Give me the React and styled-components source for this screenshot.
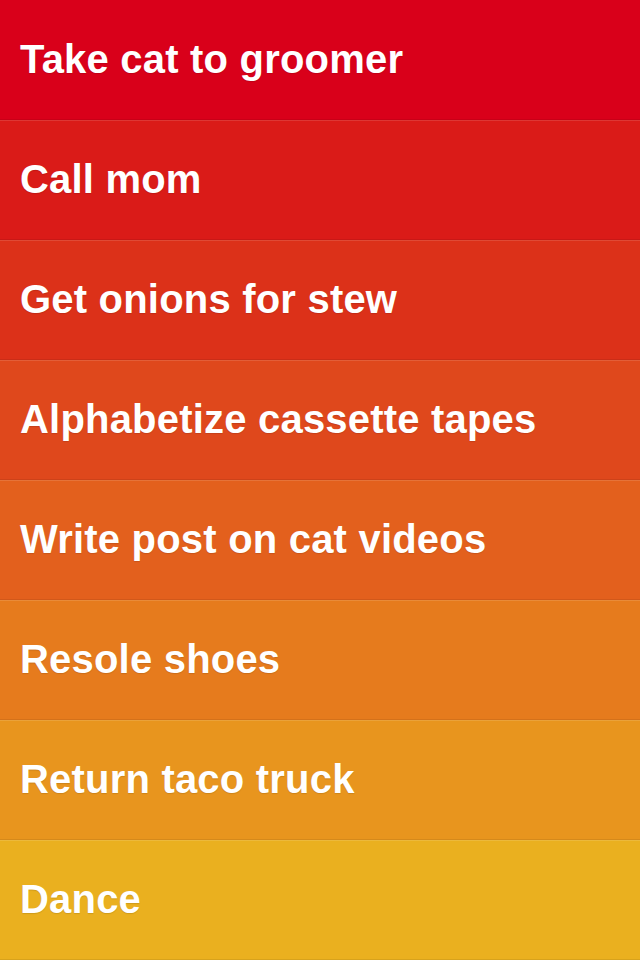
import React from 'react';
import styled, { createGlobalStyle } from 'styled-components';

const GlobalStyle = createGlobalStyle`
    html, body {
        margin: 0;
        padding: 0;
        background: #eab01f;
    }
    body {
        font-family: "Liberation Sans", Arial, sans-serif;
    }
`;

const tasks = [
    { title: 'Take cat to groomer', color: '#d9001a' },
    { title: 'Call mom', color: '#da1b18' },
    { title: 'Get onions for stew', color: '#dc3119' },
    { title: 'Alphabetize cassette tapes', color: '#df481c' },
    { title: 'Write post on cat videos', color: '#e3601d' },
    { title: 'Resole shoes', color: '#e67b1d' },
    { title: 'Return taco truck', color: '#e8951e' },
    { title: 'Dance', color: '#eab01f' },
];

function App() {
    return (
        <>
            <GlobalStyle />
            <List>
                {tasks.map((task, i) => (
                    <Row key={i} $color={task.color} $first={i === 0}>
                        <Title>{task.title}</Title>
                    </Row>
                ))}
            </List>
        </>
    );
}

const List = styled.div`
    width: 640px;
    height: 960px;
    display: flex;
    flex-direction: column;
    overflow: hidden;
`;

const Row = styled.div`
    height: 120px;
    box-sizing: border-box;
    display: flex;
    align-items: center;
    padding: 0 20px 2px;
    background: ${(p) => p.$color};
    border-top: 1px solid ${(p) => (p.$first ? p.$color : 'rgba(255, 255, 255, 0.12)')};
    border-bottom: 1px solid rgba(0, 0, 0, 0.08);
`;

const Title = styled.span`
    color: #fff;
    font-size: 40px;
    font-weight: 700;
    letter-spacing: 0.2px;
    text-shadow: 0 1px 1px rgba(0, 0, 0, 0.12);
    white-space: nowrap;
`;

export default App;
